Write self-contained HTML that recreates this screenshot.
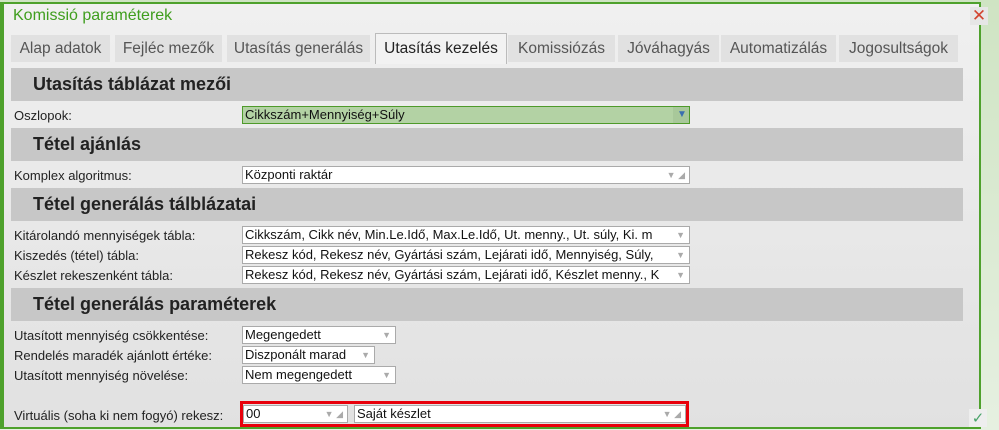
<!DOCTYPE html>
<html><head><meta charset="utf-8"><style>
*{box-sizing:border-box;margin:0;padding:0}
body{width:999px;height:430px;overflow:hidden;background:linear-gradient(#cfe4c3,#e6f0e1);position:relative;font-family:"Liberation Sans",sans-serif}
#dlg{position:absolute;left:0;top:2px;width:981px;height:427px;border:2px solid #4ea12c;border-left:4px solid #4ea12c;background:linear-gradient(#f0f0f0,#e1e1e1)}
.a{position:absolute}
.title{left:9px;top:3px;font-size:16px;color:#3f9e1e}
.x{left:966px;top:3px;width:18px;height:18px;color:#d2432e;font-size:17px;line-height:18px;text-align:center;background:#e6e6e6}
.tab{position:absolute;top:31px;height:27px;background:#e1e1e1;color:#555;font-size:15.5px;line-height:27px;text-align:center}
.tab.on{top:29px;height:31px;background:#f2f2f2;border:1px solid #bbb;border-bottom:none;color:#222;line-height:29px}
.h{position:absolute;left:7px;width:952px;height:33px;background:#c7c7c7;font-weight:bold;font-size:18px;color:#222;line-height:33px;padding-left:22px}
.l{position:absolute;left:10px;font-family:"Liberation Sans Narrow","Liberation Sans",sans-serif;font-size:13px;color:#222}
.in{position:absolute;height:18px;background:#fff;border:1px solid #aaa;font-family:"Liberation Sans Narrow","Liberation Sans",sans-serif;font-size:13px;line-height:16px;padding-left:2px;color:#111;white-space:nowrap;overflow:hidden}
.in i{position:absolute;right:4px;top:0;font-style:normal;color:#aaa;font-size:9px;background:#fff;padding-left:2px}
</style></head><body>
<div id="dlg">
<div class="a title">Komissió paraméterek</div>
<div class="a x">✕</div>
<div class="tab" style="left:7px;width:99px">Alap adatok</div>
<div class="tab" style="left:111px;width:107px">Fejléc mezők</div>
<div class="tab" style="left:223px;width:143px">Utasítás generálás</div>
<div class="tab on" style="left:371px;width:132px">Utasítás kezelés</div>
<div class="tab" style="left:504px;width:107px">Komissiózás</div>
<div class="tab" style="left:614px;width:101px">Jóváhagyás</div>
<div class="tab" style="left:717px;width:115px">Automatizálás</div>
<div class="tab" style="left:835px;width:119px">Jogosultságok</div>

<div class="h" style="top:64px">Utasítás táblázat mezői</div>
<div class="l" style="top:104px">Oszlopok:</div>
<div class="in" style="left:238px;top:102px;width:448px;background:#b3d2a4;border-color:#4e9a2a">Cikkszám+Mennyiség+Súly<i style="background:#a8c89a;color:#3a6fb0;top:0;right:0;width:16px;height:16px;text-align:center;font-size:10px">▼</i></div>

<div class="h" style="top:124px">Tétel ajánlás</div>
<div class="l" style="top:164px">Komplex algoritmus:</div>
<div class="in" style="left:238px;top:162px;width:448px">Központi raktár<i>▼ ◢</i></div>

<div class="h" style="top:184px">Tétel generálás tálblázatai</div>
<div class="l" style="top:224px">Kitárolandó mennyiségek tábla:</div>
<div class="in" style="left:238px;top:222px;width:448px">Cikkszám, Cikk név, Min.Le.Idő, Max.Le.Idő, Ut. menny., Ut. súly, Ki. m<i>▼</i></div>
<div class="l" style="top:244px">Kiszedés (tétel) tábla:</div>
<div class="in" style="left:238px;top:242px;width:448px">Rekesz kód, Rekesz név, Gyártási szám, Lejárati idő, Mennyiség, Súly,<i>▼</i></div>
<div class="l" style="top:264px">Készlet rekeszenként tábla:</div>
<div class="in" style="left:238px;top:262px;width:448px">Rekesz kód, Rekesz név, Gyártási szám, Lejárati idő, Készlet menny., K<i>▼</i></div>

<div class="h" style="top:284px">Tétel generálás paraméterek</div>
<div class="l" style="top:324px">Utasított mennyiség csökkentése:</div>
<div class="in" style="left:238px;top:322px;width:154px">Megengedett<i>▼</i></div>
<div class="l" style="top:344px">Rendelés maradék ajánlott értéke:</div>
<div class="in" style="left:238px;top:342px;width:133px">Diszponált marad<i>▼</i></div>
<div class="l" style="top:364px">Utasított mennyiség növelése:</div>
<div class="in" style="left:238px;top:362px;width:154px">Nem megengedett<i>▼</i></div>

<div class="l" style="top:404px">Virtuális (soha ki nem fogyó) rekesz:</div>
<div class="a" style="left:236px;top:397px;width:449px;height:26px;border:3px solid #e8000b"></div>
<div class="in" style="left:239px;top:401px;width:105px">00<i>▼ ◢</i></div>
<div class="in" style="left:350px;top:401px;width:332px">Saját készlet<i>▼ ◢</i></div>
<div class="a" style="left:965px;top:405px;width:18px;height:18px;background:#eee;color:#4aa36a;font-size:15px;text-align:center">✓</div>
</div>
</body></html>
